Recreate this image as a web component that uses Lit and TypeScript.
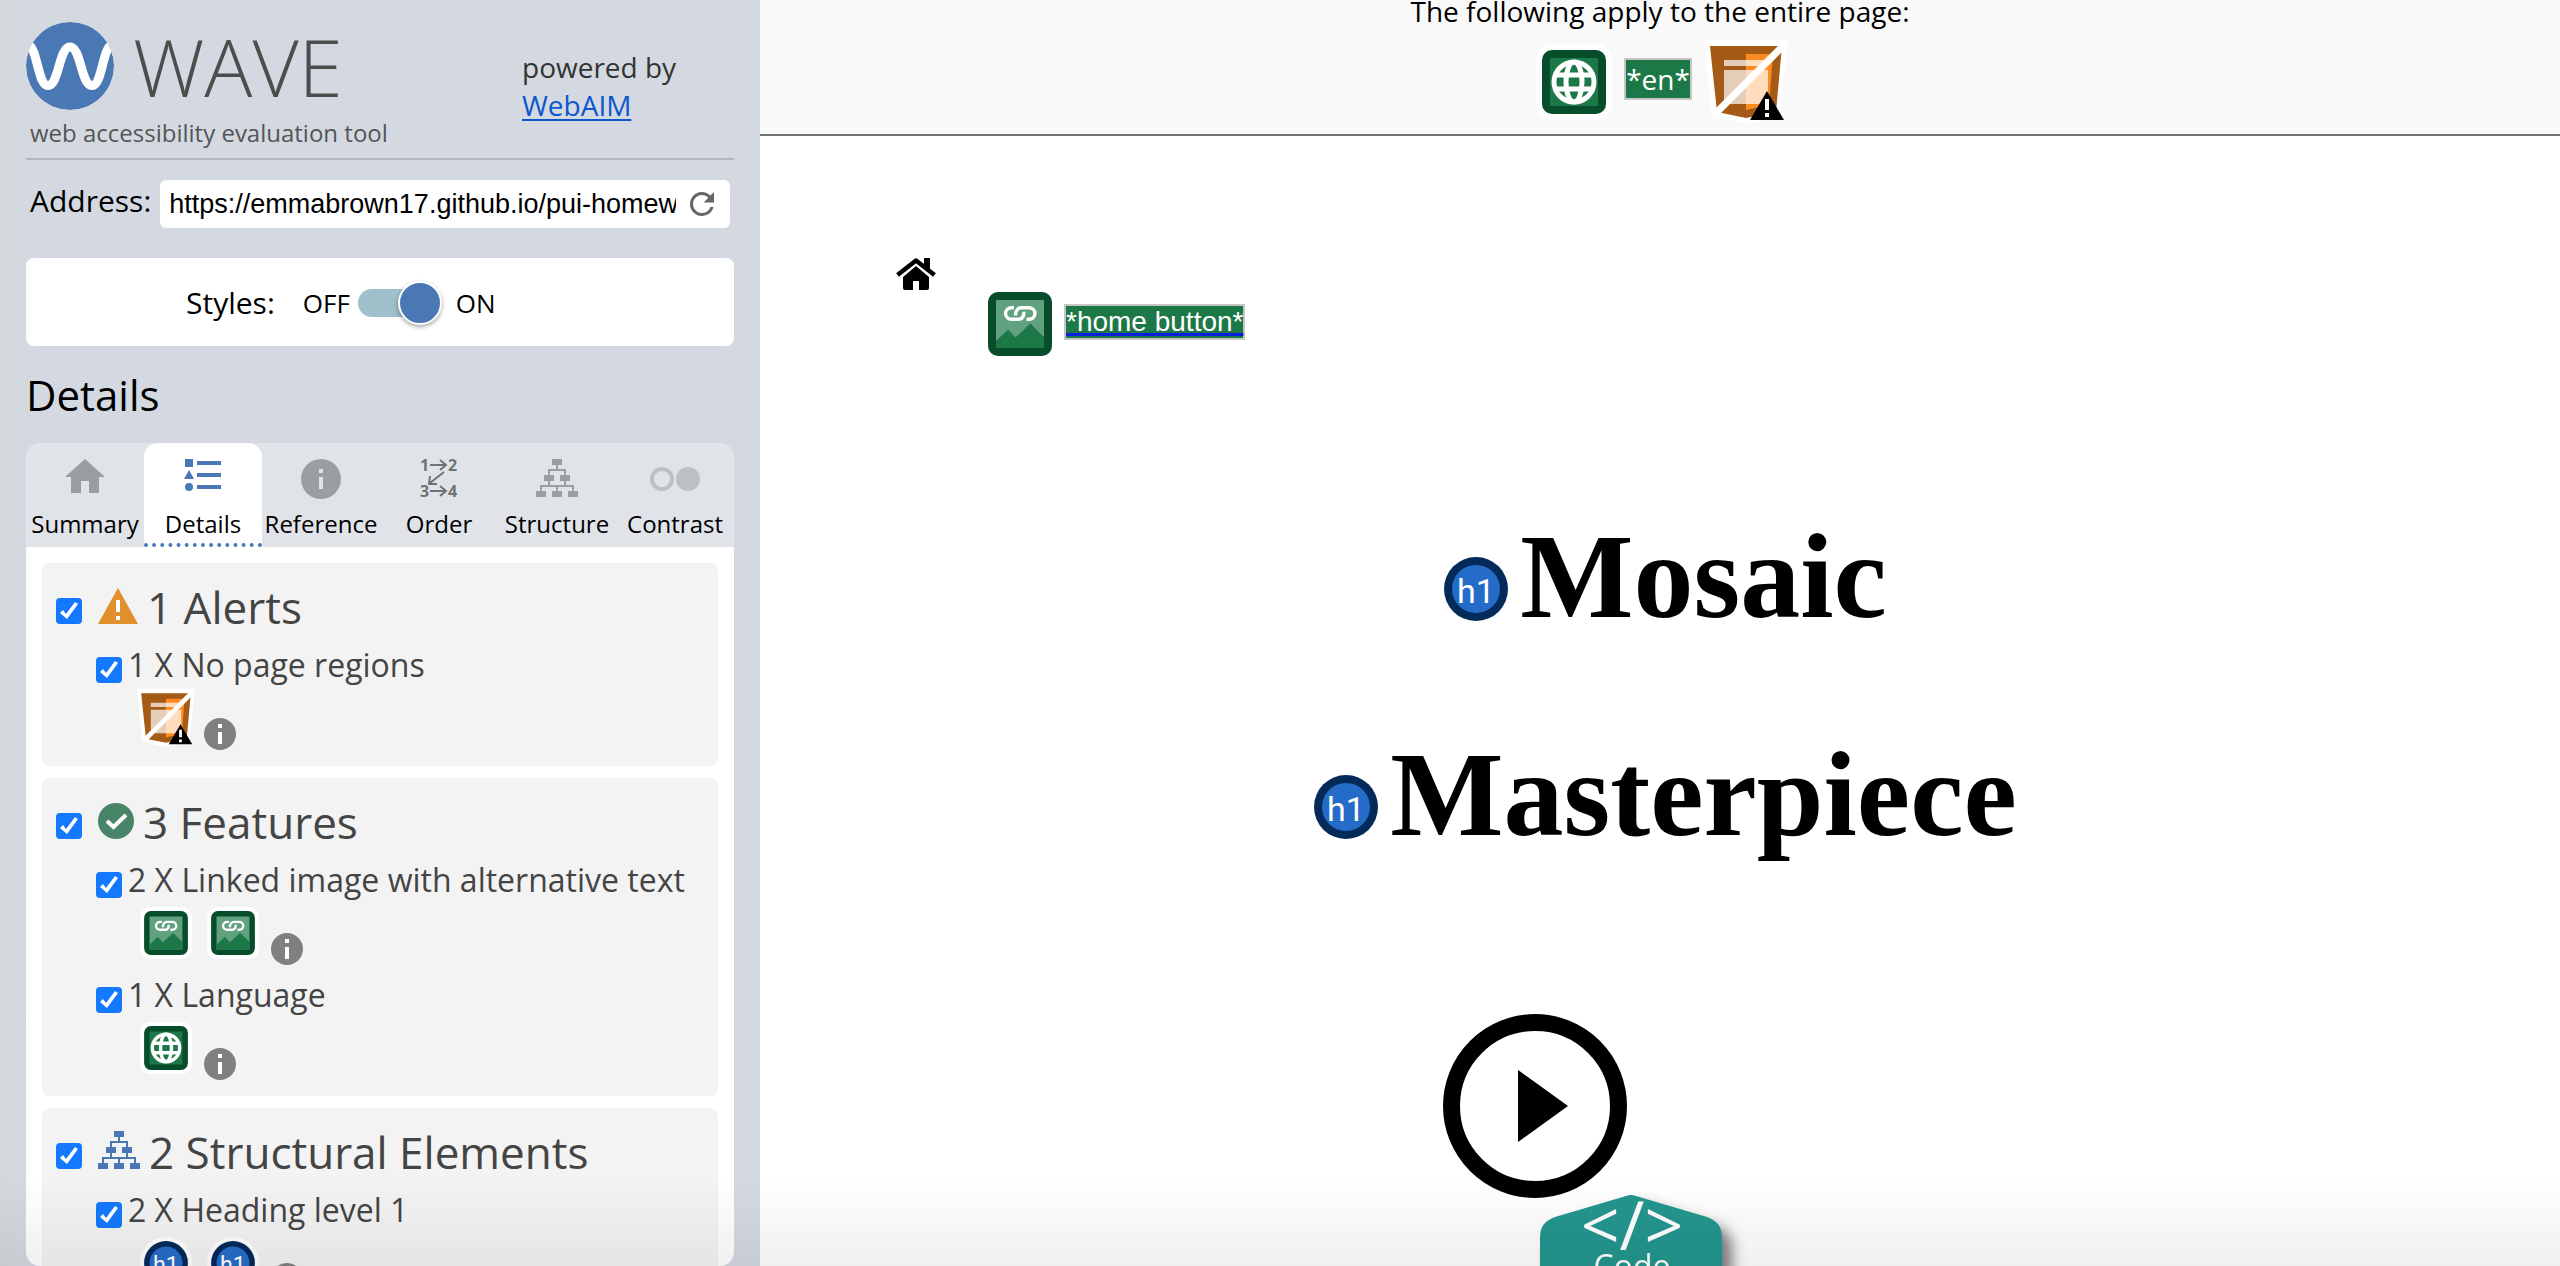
import { LitElement, html, svg, css, nothing } from "lit";
import { customElement, state } from "lit/decorators.js";
import { classMap } from "lit/directives/class-map.js";

const sitemapShape = svg`
  <path d="M16 0h10v6h-10zM8 16h10v6h-10zM24 16h10v6h-10zM0 32h10v6h-10zM16 32h10v6h-10zM32 32h10v6h-10z"/>
  <path d="M20 6h2v4h8v6h-2v-4h-14v4h-2v-6h8zM12 22h2v4h14v-4h2v4h8v6h-2v-4h-14v4h-2v-4h-14v4h-2v-6h8z"/>`;

const tabIcons: Record<string, unknown> = {
  Summary: html`<svg class="muted" width="40" height="40" viewBox="0 0 40 40" aria-hidden="true">
    <path d="M20 0L40 18H34V34H24V22H16V34H6V18H0z"/></svg>`,
  Details: html`<svg class="blue" width="38" height="40" viewBox="0 0 38 40" aria-hidden="true">
    <path d="M1 0h8v8h-8zM5 11L10 20H0zM13 2h24v4h-24zM13 14h24v4h-24zM13 26h24v4h-24z"/><circle cx="5" cy="28" r="4"/></svg>`,
  Reference: html`<svg class="muted" width="40" height="40" viewBox="0 0 40 40" aria-hidden="true">
    <circle cx="20" cy="20" r="20"/><path fill="#e0e3e8" d="M18 10h4v4h-4zM18 18h4v12h-4z"/></svg>`,
  Order: html`<svg class="order" width="38" height="40" viewBox="0 0 38 40" aria-hidden="true">
    <text x="0" y="12">1</text><text x="28" y="12">2</text><text x="0" y="38">3</text><text x="28" y="38">4</text>
    <path d="M10 6H26M20 1L26 6L20 11M10 32H26M20 27L26 32L20 37M24 13L10 24M10 17L9 25L17 25"/></svg>`,
  Structure: html`<svg class="muted" width="42" height="40" viewBox="0 0 42 40" aria-hidden="true">${sitemapShape}</svg>`,
  Contrast: html`<svg width="50" height="40" viewBox="0 0 50 40" aria-hidden="true">
    <circle cx="12" cy="20" r="10" fill="none" stroke="#bcc0c5" stroke-width="4"/><circle cx="38" cy="20" r="12" fill="#bcc0c5"/></svg>`,
};

const regionsIcon = (size: number) => html`<svg width=${size} height=${size} viewBox="0 0 84 84" role="img" aria-label="No page regions">
  <path fill="#fff" d="M0 0H84L76 76L42 84L8 76z"/>
  <path fill="#a55b15" d="M6 6H78L72 72L42 78L13 72z"/>
  <path fill="#fe8b21" d="M42 14H69L65 65L42 70z"/>
  <path fill="#fff" fill-opacity=".7" d="M20 20H64V26H20zM20 30H64V64H20z"/>
  <path stroke="#fff" stroke-width="7" d="M79 6L12 73"/>
  <path d="M63 51L80 80H46z"/>
  <path fill="#fff" d="M61 59h4v11h-4zM61 73h4v4h-4z"/></svg>`;

const globeIcon = (size: number) => html`<svg width=${size} height=${size} viewBox="0 0 76 76" role="img" aria-label="Language">
  <rect width="76" height="76" rx="15" fill="#fff"/><rect x="6" y="6" width="64" height="64" rx="10" fill="#074d2b"/>
  <rect x="14" y="14" width="48" height="48" rx="1" fill="#1d7848"/>
  <g fill="none" stroke="#fff" stroke-width="5"><circle cx="38" cy="38" r="20"/>
  <ellipse cx="38" cy="38" rx="8" ry="20"/><path d="M19 31H57M19 45H57"/></g></svg>`;

const linkedImageIcon = (size: number) => html`<svg width=${size} height=${size} viewBox="-6 -6 76 76" role="img" aria-label="Linked image with alternative text">
  <rect x="-6" y="-6" width="76" height="76" rx="15" fill="#fff"/><rect width="64" height="64" rx="10" fill="#074d2b"/>
  <rect x="8" y="8" width="48" height="48" rx="1" fill="#62a180"/>
  <path fill="#1d7848" d="M8 49L20 37.5L27.5 45.5L42.5 31.5L56 45V56H8z"/>
  <path fill="none" stroke="#fff" stroke-width="3.4" d="M26 15.7h-2.5a6 5.8 0 0 0 0 11.6h6.5c4 0 6-3 6-7.5M27.5 23.5c0-5 2.5-7.8 6-7.8h7.5a6 5.8 0 0 1 0 11.6h-2.5"/></svg>`;

const headingIcon = (size: number, halo = true) => html`<svg width=${size} height=${size}
  viewBox=${halo ? "-6 -6 76 76" : "0 0 64 64"} role="img" aria-label="Heading level 1">
  ${halo ? svg`<circle cx="32" cy="32" r="38" fill="#fff"/>` : nothing}
  <circle cx="32" cy="32" r="32" fill="#042a5a"/><circle cx="32" cy="32" r="24" fill="#256cc8"/>
  <text class="h1-glyph" x="32" y="46" text-anchor="middle">h1</text></svg>`;

const groupIcons: Record<string, unknown> = {
  Alerts: html`<svg width="40" height="36" viewBox="0 0 40 36" aria-hidden="true">
    <path fill="#e2902b" d="M20 0L40 36H0z"/><path fill="#fff" d="M18 12h4v12h-4zM18 28h4v4h-4z"/></svg>`,
  Features: html`<svg width="36" height="36" viewBox="0 0 36 36" aria-hidden="true">
    <circle cx="18" cy="18" r="18" fill="#488568"/><path fill="none" stroke="#fff" stroke-width="4" d="M9 18L15.500 24L28 12"/></svg>`,
  "Structural Elements": html`<svg class="blue" width="42" height="38" viewBox="0 0 42 38" aria-hidden="true">${sitemapShape}</svg>`,
};

interface Item { label: string; icons: unknown[] }
interface Group { count: number; name: string; items: Item[] }

const groups: Group[] = [
  { count: 1, name: "Alerts", items: [{ label: "1 X No page regions", icons: [regionsIcon(58)] }] },
  { count: 3, name: "Features", items: [
    { label: "2 X Linked image with alternative text", icons: [linkedImageIcon(52), linkedImageIcon(52)] },
    { label: "1 X Language", icons: [globeIcon(52)] },
  ] },
  { count: 2, name: "Structural Elements", items: [
    { label: "2 X Heading level 1", icons: [headingIcon(52), headingIcon(52)] },
  ] },
];

@customElement("wave-sidebar")
class WaveSidebar extends LitElement {
  @state() private tab = "Details";

  static styles = css`
    :host { display: flex; flex-direction: column; box-sizing: border-box; min-height: 0; padding: 22px 26px 0;
      background: linear-gradient(90deg, #d2d8da, #d4d9e1 26px); font-family: "Open Sans", sans-serif; color: #000; }
    svg { display: block; flex: none; overflow: visible; }
    button { font: inherit; color: inherit; border: 0; padding: 0; background: none; cursor: pointer; }
    .blue { fill: #4a78b4; }
    .muted { fill: #9a9ea1; }
    .order { fill: #707376; font: 700 16px "Open Sans", sans-serif; }
    .order path { fill: none; stroke: #707376; stroke-width: 2; }
    .h1-glyph { font: 400 34px Roboto, sans-serif; fill: #fff; }
    .header { display: grid; grid-template-columns: 1fr 212px; padding-bottom: 9px; border-bottom: 2px solid #b2b7bc; }
    .brand { display: flex; gap: 19px; color: #4d4d4d; }
    .name { font-size: 80px; line-height: 88px; font-weight: 300; }
    .tagline { margin: 7px 0 0 4px; font-size: 24px; line-height: 32px; color: #555; }
    .powered { padding-top: 26px; font-size: 28px; line-height: 38px; color: #333; }
    .powered a { display: block; color: #0b57d0; text-decoration-thickness: 2px; text-underline-offset: 3px; }
    .address { display: flex; gap: 9px; padding: 0 4px; margin-top: 20px; }
    .address label { font-size: 30px; line-height: 42px; }
    .field { display: flex; align-items: center; gap: 14px; flex: 1; min-width: 0; height: 48px; box-sizing: border-box;
      padding: 0 16px 0 9px; border-radius: 6px; background: #fff; }
    .field input { flex: 1; min-width: 0; border: 0; padding: 0; outline: 0; background: none; color: #000;
      font: 27px "Liberation Sans", Arial, sans-serif; }
    .styles { display: flex; align-items: center; gap: 28px; margin-top: 30px; padding: 25px 0 23px 160px;
      border-radius: 8px; background: #fff; font-size: 30px; line-height: 40px; }
    .switch { display: flex; align-items: center; gap: 8px; font-size: 26px; }
    .switch input { appearance: none; display: flex; align-items: center; justify-content: flex-start;
      width: 84px; height: 28px; margin: 0 6px 0 0; border-radius: 14px; background: #9fbfca; }
    .switch input::before { content: ""; width: 40px; height: 40px; border: 2px solid #fff; border-radius: 50%;
      background: #4a78b4; box-shadow: 0 2px 4px rgba(0, 0, 0, .35); }
    .switch input:checked { justify-content: flex-end; }
    .title { margin: 21px 0 20px; font-size: 42px; line-height: 56px; font-weight: 400; }
    .tabs { display: grid; grid-template-columns: repeat(6, 1fr); border-radius: 14px 14px 0 0; background: #e0e3e8; }
    .tab { display: flex; flex-direction: column; align-items: center; gap: 9px; min-width: 0; padding: 16px 0 3px;
      border-bottom: 4px dotted transparent; border-radius: 14px 14px 0 0; font-size: 24px; line-height: 32px; }
    .tab.active { background: #fff; border-bottom-color: #4a78b4; }
    .panel { display: flex; flex-direction: column; gap: 12px; flex: 1; min-height: 0; overflow: hidden;
      padding: 16px 16px 0; border-radius: 0 0 14px 14px; background: #fff; }
    .card { flex: none; padding: 14px 0 8px; border-radius: 8px; background: #f3f3f3; color: #444; }
    .head { display: flex; align-items: baseline; gap: 16px; margin: 0 0 6px; padding-left: 14px;
      font-size: 44px; line-height: 60px; font-weight: 400; }
    .head label { display: flex; align-items: baseline; gap: 9px; }
    .row { display: flex; align-items: flex-start; gap: 6px; padding-left: 54px; font-size: 32px; line-height: 44px; }
    .row .check { margin-top: 14px; }
    .check { appearance: none; flex: none; width: 26px; height: 26px; margin: 0; border-radius: 4px; background: #1479fe; }
    .check:not(:checked) { background: #fff; box-shadow: inset 0 0 0 1px #888; }
    .check:checked::before { content: ""; display: block; width: 26px; height: 26px; background: #fff;
      clip-path: polygon(4px 15px, 7px 12px, 10px 16px, 19px 4px, 22px 6px, 11px 21px); }
    .icons { display: flex; align-items: flex-start; gap: 9px; height: 69px; padding: 2px 0 0 95px; }
    .slot { display: grid; place-items: center; width: 58px; height: 58px; }
    .info { margin-top: 29px; }
  `;

  render() {
    return html`
      <header class="header">
        <div>
          <div class="brand">
            <svg width="88" height="88" viewBox="0 0 88 88" aria-hidden="true">
              <clipPath id="disc"><circle cx="44" cy="44" r="44"/></clipPath>
              <g clip-path="url(#disc)"><circle cx="44" cy="44" r="44" fill="#4a78b4"/>
              <path fill="none" stroke="#fff" stroke-width="9" d="M0 22C12 22 11 63.500 22 63.500S33 25 44 25S55 63.500 66 63.500S76 22 88 22"/></g>
            </svg>
            <span class="name">WAVE</span>
          </div>
          <p class="tagline">web accessibility evaluation tool</p>
        </div>
        <div class="powered">powered by <a href="#webaim">WebAIM</a></div>
      </header>
      <div class="address">
        <label for="url">Address:</label>
        <div class="field">
          <input id="url" type="text" value="https://emmabrown17.github.io/pui-homework/" />
          <button type="button" aria-label="Reload">
            <svg width="24" height="24" viewBox="4 4 16 16" aria-hidden="true"><path fill="#666"
              d="M17.650 6.350A8 8 0 1 0 19.730 14h-2.080A6 6 0 1 1 12 6c1.660 0 3.140.690 4.220 1.780L13 11h7V4z"/></svg>
          </button>
        </div>
      </div>
      <div class="styles">
        <label for="styles">Styles:</label>
        <div class="switch"><span>OFF</span><input id="styles" type="checkbox" role="switch" checked /><span>ON</span></div>
      </div>
      <h2 class="title">Details</h2>
      <div class="tabs" role="tablist">
        ${Object.keys(tabIcons).map((name) => html`
          <button type="button" role="tab" aria-selected=${name === this.tab}
            class=${classMap({ tab: true, active: name === this.tab })}
            @click=${() => (this.tab = name)}>${tabIcons[name]}<span>${name}</span></button>`)}
      </div>
      <div class="panel" role="tabpanel" aria-label="Details">
        ${groups.map((group, g) => html`
          <section class="card">
            <h3 class="head">
              <input class="check" id="group-${g}" type="checkbox" checked />
              <label for="group-${g}">${groupIcons[group.name]}<span>${group.count} ${group.name}</span></label>
            </h3>
            ${group.items.map((item, i) => html`
              <div class="row">
                <input class="check" id="item-${g}-${i}" type="checkbox" checked />
                <label for="item-${g}-${i}">${item.label}</label>
              </div>
              <div class="icons">
                ${item.icons.map((icon) => html`<button type="button" class="slot">${icon}</button>`)}
                <button type="button" class="info" aria-label="More about ${item.label}">
                  <svg width="32" height="32" viewBox="0 0 32 32" aria-hidden="true"><circle cx="16" cy="16" r="16" fill="#808080"/>
                    <path fill="#fff" d="M14 6h4v4h-4zM14 14h4v12h-4z"/></svg>
                </button>
              </div>`)}
          </section>`)}
      </div>`;
  }
}

@customElement("evaluated-page")
class EvaluatedPage extends LitElement {
  static styles = css`
    :host { display: block; position: relative; min-width: 0; overflow: hidden; background: #fff; color: #000; }
    svg { display: block; flex: none; overflow: visible; }
    .h1-glyph { font: 400 34px Roboto, sans-serif; fill: #fff; }
    .banner { padding-bottom: 10px; border-bottom: 2px solid #6e776e; background: #f9f9f9; text-align: center;
      font: 28px "Open Sans", sans-serif; }
    .banner p { margin: 0 0 18px; line-height: 22px; }
    .flags { display: flex; align-items: center; justify-content: center; gap: 12px; padding-left: 4px; }
    .alt { border: 2px solid #c6c6c6; background: #1d7848; color: #fff; }
    .flags .alt { margin-top: -6px; line-height: 38px; }
    .nav { display: flex; align-items: flex-start; gap: 46px; padding: 122px 0 0 136px; }
    .marker { display: flex; align-items: center; gap: 6px; padding-top: 28px; }
    .marker .alt { margin-top: -4px; font: 28px "Liberation Sans", Arial, sans-serif; line-height: 32px;
      text-decoration: underline 3px #0a1fe0; text-underline-offset: 2px; }
    .hero { display: flex; flex-direction: column; align-items: center; gap: 80px; padding: 146px 0 0 11px; }
    .hero h1 { display: flex; align-items: center; gap: 12px; margin: 0;
      font: 700 120px "Liberation Serif", "Times New Roman", serif; line-height: 138px; }
    .hero h1 svg { margin-top: 24px; }
    .play { display: flex; justify-content: center; padding: 150px 250px 0 0; }
    .code { position: absolute; left: calc(50% - 120px); bottom: -123px; padding: 0; border: 0; background: none;
      filter: drop-shadow(10px 10px 7px rgba(0, 0, 0, .5)); }
    .code text { font-family: "Open Sans", sans-serif; fill: #fff; }
    .code .mark { font-size: 68px; }
    .code .word { font-size: 32px; }
  `;

  render() {
    return html`
      <div class="banner">
        <p>The following apply to the entire page:</p>
        <div class="flags">${globeIcon(76)}<span class="alt">*en*</span>${regionsIcon(84)}</div>
      </div>
      <nav class="nav">
        <a href="#home" aria-label="Home">
          <svg width="40" height="32" viewBox="0 0 40 32" aria-hidden="true">
            <path d="M28 0h6v14l-6-5z"/>
            <path fill="none" stroke="#000" stroke-width="4.500" stroke-linejoin="round" d="M1.500 17L20 2.500L38.500 17"/>
            <path d="M20 8L33 19V30a2 2 0 0 1-2 2H23V23H17V32H9a2 2 0 0 1-2-2V19z"/></svg>
        </a>
        <div class="marker">${linkedImageIcon(76)}<span class="alt">*home button*</span></div>
      </nav>
      <div class="hero">
        <h1>${headingIcon(64, false)}<span>Mosaic</span></h1>
        <h1>${headingIcon(64, false)}<span>Masterpiece</span></h1>
      </div>
      <div class="play">
        <a href="#play" aria-label="Play">
          <svg width="184" height="184" viewBox="0 0 184 184" aria-hidden="true">
            <circle cx="92" cy="92" r="83.500" fill="none" stroke="#000" stroke-width="17"/><path d="M75 56L125 92L75 128z"/></svg>
        </a>
      </div>
      <button class="code" type="button" aria-label="Code">
        <svg width="182" height="194" viewBox="0 0 182 194" aria-hidden="true">
          <path fill="#23968e" d="M86 1Q91 -1 96 1L167 22Q182 27 182 42V152Q182 167 167 172L96 193Q91 195 86 193L15 172Q0 167 0 152V42Q0 27 15 22z"/>
          <text class="mark" x="92" y="55" text-anchor="middle">&lt;/&gt;</text>
          <text class="word" x="92" y="83" text-anchor="middle">Code</text></svg>
      </button>`;
  }
}

@customElement("app-root")
class AppRoot extends LitElement {
  static styles = css`
    :host { display: grid; grid-template-columns: 760px 1fr; grid-template-rows: 100vh; position: relative; overflow: hidden; }
    .shade { position: absolute; inset: auto 0 0 0; height: 90px; pointer-events: none;
      background: linear-gradient(transparent, rgba(0, 0, 0, .06)); }
  `;

  render() {
    return html`<wave-sidebar></wave-sidebar><evaluated-page></evaluated-page><div class="shade"></div>`;
  }
}
